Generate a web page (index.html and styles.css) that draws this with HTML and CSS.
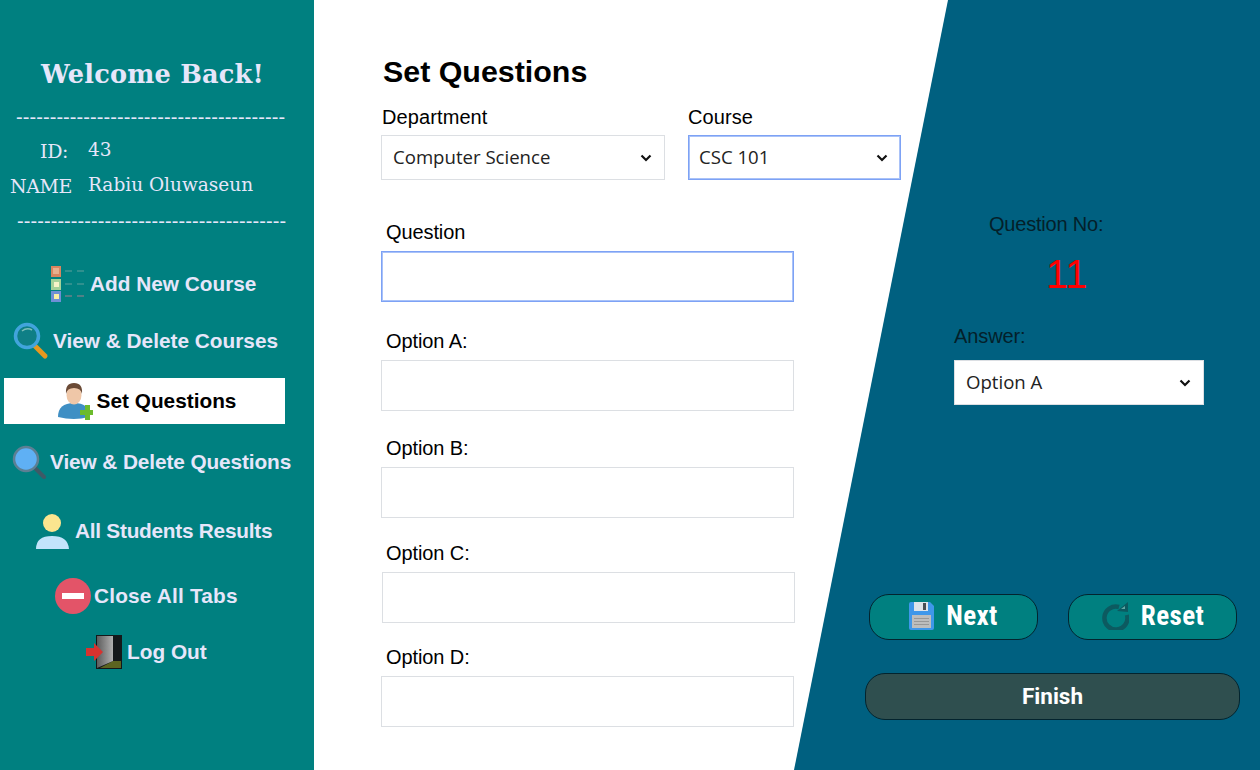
FILE: index.html
```html
<!DOCTYPE html>
<html>
  <head>
    <title>Set Questions</title>
    <link rel="stylesheet" href="styles.css">
  </head>
  <body>
    <div class="app">
      <aside class="sidebar">
        <h2 class="welcome">Welcome Back!</h2>
        <div class="dashes">----------------------------------------</div>
        <dl class="profile">
          <dt class="profile-id">ID:</dt>
          <dd class="profile-id">43</dd>
          <dt>NAME</dt>
          <dd>Rabiu Oluwaseun</dd>
        </dl>
        <div class="dashes dashes-low">----------------------------------------</div>

        <nav class="menu">
          <a class="menu-item indent-add" href="#">
            <svg class="icon" width="36" height="36" viewBox="0 0 36 36">
              <rect x="1" y="0" width="10" height="11" fill="#d9855f"/>
              <rect x="3" y="2" width="6" height="6" fill="#e8b08e"/>
              <rect x="1" y="13" width="10" height="11" fill="#a5d29a"/>
              <rect x="4" y="16" width="5" height="5" fill="#f7f4c9"/>
              <rect x="1" y="25" width="10" height="11" fill="#6f8fd6"/>
              <rect x="4" y="28" width="5" height="5" fill="#f9efa6"/>
              <path d="M15 5h7M27 5h7M15 18h7M27 18h7" stroke="#5fa09c" stroke-width="1"/>
              <path d="M15 30h7M27 30h7" stroke="#a2808c" stroke-width="1"/>
            </svg>
            <span>Add New Course</span>
          </a>
          <a class="menu-item indent-courses" href="#">
            <svg class="icon" width="36" height="38" viewBox="0 0 36 38">
              <path d="M21 23l11 11" stroke="#e8981e" stroke-width="5" stroke-linecap="round"/>
              <circle cx="14" cy="14" r="11.500" fill="#0f7f86" stroke="#41a4dc" stroke-width="3.500"/>
              <path d="M9 9q5-4 10-1" fill="none" stroke="#7dbfb9" stroke-width="1.500"/>
            </svg>
            <span>View &amp; Delete Courses</span>
          </a>
          <a class="menu-item menu-item-active" href="#">
            <svg class="icon" width="36" height="38" viewBox="0 0 36 38">
              <path d="M1 35q0-14 16-14t15 14q-15 4-31 0z" fill="#3f8fc4"/>
              <ellipse cx="17" cy="13" rx="7.500" ry="9.500" fill="#efc7a8"/>
              <path d="M9 12q-1-11 8-11t8 11q-1-6-8-6t-8 6z" fill="#6b4a35"/>
              <path d="M23 28h5v-5h5v5h3v5h-3v5h-5v-5h-5z" fill="#6cbb2c"/>
            </svg>
            <span>Set Questions</span>
          </a>
          <a class="menu-item indent-questions" href="#">
            <svg class="icon" width="34" height="34" viewBox="0 0 34 34">
              <path d="M22 22l10 10" stroke="#3f5a66" stroke-width="4" stroke-linecap="round"/>
              <circle cx="14" cy="14" r="12" fill="#5fb0f4" stroke="#5d7f93" stroke-width="2.500"/>
            </svg>
            <span>View &amp; Delete Questions</span>
          </a>
          <a class="menu-item indent-students" href="#">
            <svg class="icon" width="35" height="37" viewBox="0 0 35 37">
              <circle cx="17" cy="10" r="9" fill="#fbe58f"/>
              <path d="M1 36q0-13 16-13t17 13z" fill="#c2e4fb"/>
            </svg>
            <span>All Students Results</span>
          </a>
          <a class="menu-item indent-close" href="#">
            <svg class="icon" width="36" height="36" viewBox="0 0 36 36">
              <circle cx="18" cy="18" r="18" fill="#e35468"/>
              <rect x="7" y="15" width="22" height="6" fill="#fff"/>
            </svg>
            <span>Close All Tabs</span>
          </a>
          <a class="menu-item indent-logout" href="#">
            <svg class="icon" width="36" height="36" viewBox="0 0 36 36">
              <defs>
                <linearGradient id="door" x1="0" x2="1" y1="0" y2="0">
                  <stop offset="0" stop-color="#5c5c5c"/>
                  <stop offset="1" stop-color="#b0b0b0"/>
                </linearGradient>
              </defs>
              <rect x="10" y="1" width="26" height="34" fill="#14181a"/>
              <path d="M27 27h8v7H14z" fill="#5b6420"/>
              <path d="M11 2h16v25l-16 7z" fill="url(#door)"/>
              <path d="M0 14h8v-5l9 9-9 9v-5H0z" fill="#d8322f"/>
            </svg>
            <span>Log Out</span>
          </a>
        </nav>
      </aside>

      <main class="content">
        <h1 class="title">Set Questions</h1>
        <div class="pickers">
          <div class="picker picker-dept">
            <label>Department</label>
            <div class="select-wrap">
              <select class="control select"><option>Computer Science</option></select>
              <svg class="chevron" width="12" height="8" viewBox="0 0 12 8"><path d="M1.500 1.500L6 6l4.500-4.500" fill="none" stroke="#111" stroke-width="2.200"/></svg>
            </div>
          </div>
          <div class="picker picker-course">
            <label>Course</label>
            <div class="select-wrap">
              <select class="control select is-focus"><option>CSC 101</option></select>
              <svg class="chevron" width="12" height="8" viewBox="0 0 12 8"><path d="M1.500 1.500L6 6l4.500-4.500" fill="none" stroke="#111" stroke-width="2.200"/></svg>
            </div>
          </div>
        </div>

        <div class="lower">
          <form class="fields">
            <div class="field">
              <label>Question</label>
              <input class="control text is-focus" type="text">
            </div>
            <div class="field">
              <label>Option A:</label>
              <input class="control text" type="text">
            </div>
            <div class="field">
              <label>Option B:</label>
              <input class="control text" type="text">
            </div>
            <div class="field field-c">
              <label>Option C:</label>
              <input class="control text" type="text">
            </div>
            <div class="field">
              <label>Option D:</label>
              <input class="control text" type="text">
            </div>
          </form>

          <section class="panel">
            <div class="number-label">Question No:</div>
            <div class="number">11</div>
            <div class="answer">
              <label>Answer:</label>
              <div class="select-wrap">
                <select class="control select"><option>Option A</option></select>
                <svg class="chevron" width="12" height="8" viewBox="0 0 12 8"><path d="M1.500 1.500L6 6l4.500-4.500" fill="none" stroke="#111" stroke-width="2.200"/></svg>
              </div>
            </div>
            <div class="actions">
              <button class="btn" type="button">
                <svg width="25" height="28" viewBox="0 0 25 28">
                  <path d="M2 0h19l4 4v22q0 2-2 2H2q-2 0-2-2V2q0-2 2-2z" fill="#3f97ea"/>
                  <rect x="5" y="0" width="14" height="9" fill="#dfe4ea"/>
                  <rect x="14" y="1" width="3" height="7" fill="#4a4f55"/>
                  <rect x="3" y="13" width="19" height="13" fill="#bdbdbd"/>
                  <path d="M5 16.500h15M5 19.500h15M5 22.500h15" stroke="#989898" stroke-width="1"/>
                </svg>
                <span>Next</span>
              </button>
              <button class="btn" type="button">
                <svg width="28" height="28" viewBox="0 0 28 28">
                  <path d="M18 5a11.500 11.500 0 1 0 8 8" fill="none" stroke="#0c5a60" stroke-width="4.500"/>
                  <path d="M16 9l11 1V0z" fill="#0c5a60"/>
                  <path d="M20 7l4 0v-3z" fill="#5fa8a4"/>
                </svg>
                <span>Reset</span>
              </button>
            </div>
            <button class="btn-finish" type="button">Finish</button>
          </section>
        </div>
      </main>
    </div>
  </body>
</html>
```

FILE: styles.css
```css
* {
    box-sizing: border-box;
}
html, body {
    margin: 0;
    height: 100%;
    overflow: hidden;
}
body {
    font-family: "Liberation Sans", Arial, sans-serif;
    color: #000;
}
label {
    display: block;
}

.app {
    display: flex;
    height: 770px;
}

/* left menu */
.sidebar {
    width: 314px;
    flex: none;
    background: #008080;
    color: #e6e6fa;
    padding-top: 57px;
}
.welcome {
    margin: 0;
    text-align: center;
    font-family: "DejaVu Serif", serif;
    font-size: 25.600px;
    line-height: 34px;
    font-weight: bold;
    letter-spacing: 0.2px;
    padding-right: 9px;
}
.dashes {
    font-size: 20px;
    line-height: 20px;
    white-space: nowrap;
    letter-spacing: 0.07px;
    margin: 16px 0 0 16px;
}
.dashes-low {
    margin: 0 0 0 17px;
}
.profile {
    display: grid;
    grid-template-columns: 72px 1fr;
    grid-template-rows: 35px 35px;
    column-gap: 16px;
    margin: 5px 0 9px;
    font-family: "DejaVu Serif", serif;
    align-items: center;
}
.profile dt {
    text-align: right;
    font-size: 19px;
    letter-spacing: -0.4px;
    padding-top: 3px;
}
.profile dd {
    margin: 0;
    font-size: 18.500px;
}
dt.profile-id {
    padding-right: 4px;
}

.menu {
    display: grid;
    grid-template-rows: 56px 58px 62px 60px 78px 52px 60px;
    margin-top: 25px;
}
.menu-item {
    display: flex;
    align-items: center;
    align-self: center;
    justify-self: start;
    gap: 4px;
    color: #e6e6fa;
    font-size: 20.800px;
    font-weight: bold;
    text-decoration: none;
    white-space: nowrap;
}
.icon {
    flex: none;
}
.menu-item-active {
    justify-content: center;
    width: 281px;
    height: 46px;
    margin-left: 4px;
    background: #fff;
    color: #000;
    padding-left: 4px;
}
.indent-add { margin-left: 50px; }
.indent-courses { margin-left: 13px; }
.indent-questions { margin-left: 12px; letter-spacing: -0.1px; }
.indent-students { margin-left: 35px; gap: 5px; letter-spacing: -0.25px; }
.indent-close { margin-left: 55px; gap: 3px; letter-spacing: 0.2px; }
.indent-logout { margin-left: 86px; gap: 5px; }

/* main area, the slanted blue part sits behind the form */
.content {
    position: relative;
    flex: 1;
    background: #fff;
    padding: 54px 0 0 67px;
}
.content::before {
    content: "";
    position: absolute;
    inset: 0;
    background: #006080;
    clip-path: polygon(634px 0, 946px 0, 946px 770px, 480px 770px);
}
.content > * {
    position: relative;
}
.title {
    margin: 0 0 0 2px;
    font-size: 30.400px;
    line-height: 34px;
    font-weight: bold;
}
.pickers {
    display: flex;
    gap: 23px;
    margin-top: 17px;
}
.picker label,
.field label,
.answer label {
    font-size: 20px;
    line-height: 24px;
    letter-spacing: -0.1px;
}
.picker label {
    letter-spacing: 0.1px;
}
.picker-dept label {
    padding-left: 1px;
}
.picker-dept { width: 284px; }
.picker-course { width: 213px; }
.select-wrap { position: relative; }
.picker .select-wrap { margin-top: 6px; }
.chevron {
    position: absolute;
    right: 13px;
    top: 19px;
    pointer-events: none;
}

.control {
    display: block;
    width: 100%;
    border: 1px solid #dcdfe3;
    border-radius: 0;
    background: #fff;
    outline: none;
    margin: 0;
}
.control.is-focus {
    border: 1px solid #7da2f5;
    box-shadow: inset 0 0 0 1px #a9c2f8;
}
.select {
    appearance: none;
    height: 45px;
    padding: 0 8px 2px 11px;
    font-family: "Open Sans", "Noto Sans", sans-serif;
    font-size: 18.600px;
    color: #222;
}
.picker-course .select {
    padding-left: 10px;
}
.text {
    height: 51px;
}

.lower {
    display: flex;
    margin-top: 29px;
}
.fields {
    display: grid;
    grid-template-rows: 109px 107px 105px 104px 82px;
    width: 484px;
    flex: none;
    margin-top: 11px;
}
.field {
    width: 413px;
}
.field label {
    height: 31px;
    padding-left: 5px;
}
.field-c {
    margin-left: 1px;
}
.field-c label {
    padding-left: 4px;
}

/* right side */
.panel {
    flex: 1;
    height: 520px;
    display: flex;
    flex-direction: column;
    padding-right: 20px;
}
.number-label {
    font-size: 20px;
    line-height: 24px;
    letter-spacing: -0.2px;
    padding-left: 124px;
    margin-top: 3px;
    color: #04202a;
}
.number {
    font-size: 40px;
    line-height: 46px;
    color: #ff0000;
    margin: 15px 0 0 181px;
}
.answer {
    width: 250px;
    margin: 27px 0 0 89px;
    color: #04202a;
}
.answer label {
    margin-bottom: 12px;
}
.actions {
    display: flex;
    gap: 30px;
    margin: 189px 0 0 4px;
}
.btn {
    width: 169px;
    height: 46px;
    display: flex;
    align-items: center;
    justify-content: center;
    gap: 12px;
    background: #008080;
    border: 1px solid #03242e;
    border-radius: 20px;
    color: #fff;
    font-family: "Roboto", sans-serif;
    font-size: 27px;
    font-weight: bold;
    font-stretch: 75%;
    letter-spacing: 0.4px;
    padding: 0 0 2px;
}
.btn-finish {
    width: 375px;
    height: 47px;
    margin-top: 33px;
    background: #2f4f4f;
    border: 1px solid #03242e;
    border-radius: 20px;
    color: #fff;
    font-family: "Roboto", sans-serif;
    font-size: 22.500px;
    font-weight: bold;
    padding: 0 0 1px;
}
```
